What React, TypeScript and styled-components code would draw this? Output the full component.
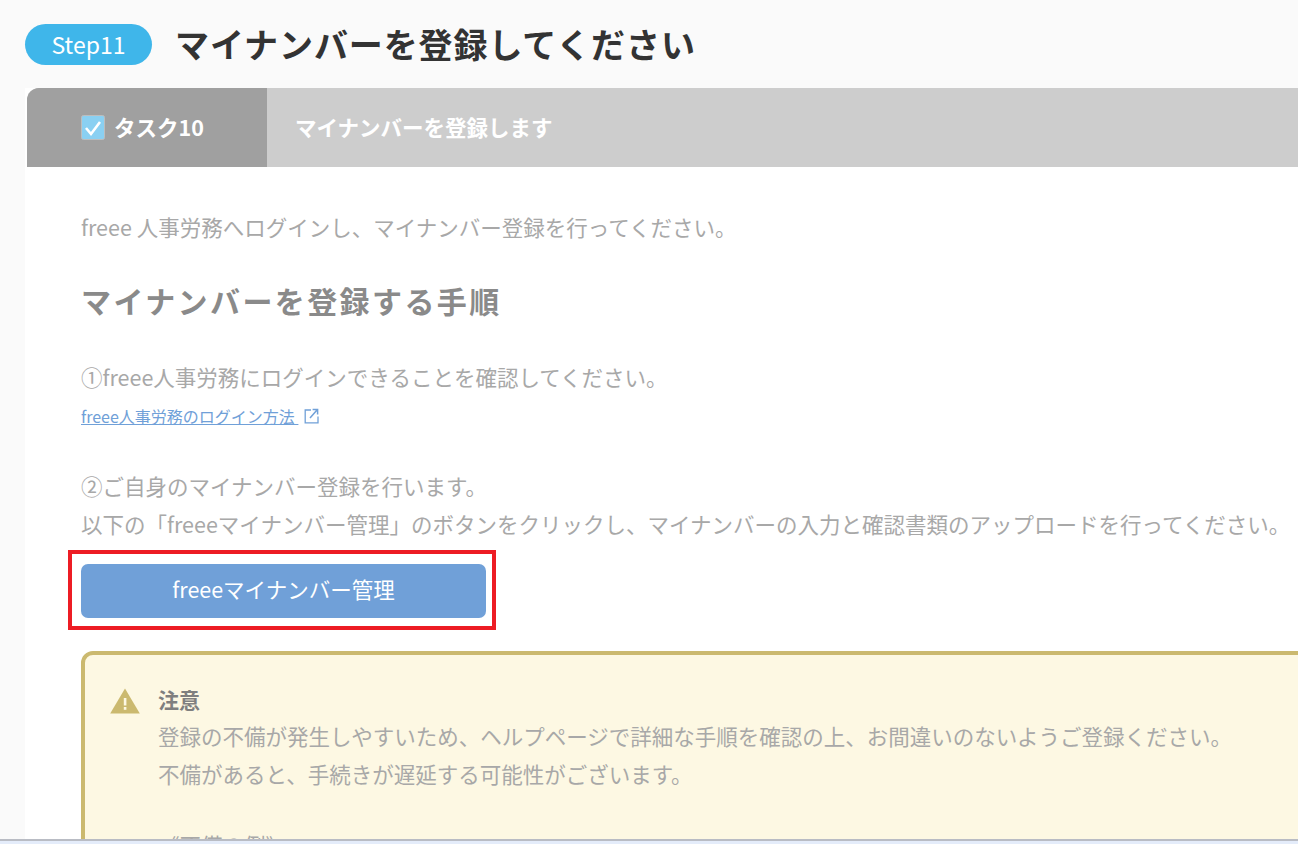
import styled, { createGlobalStyle } from 'styled-components';

const GlobalStyle = createGlobalStyle`
  html, body {
    margin: 0;
    padding: 0;
    height: 100%;
    overflow: hidden;
    background: #fafafa;
    font-family: 'Noto Sans CJK JP', 'Noto Sans', sans-serif;
  }
`;

function CheckBox() {
  return (
    <svg width='24' height='25' viewBox='0 0 24 25'>
      <rect x='0.5' y='0.5' width='23' height='24' rx='2' fill='#8ad0f2' stroke='#bdbdbd' />
      <path d='M5 13l5 6 9-12' fill='none' stroke='#fff' strokeWidth='2.6' />
    </svg>
  );
}

function ExternalIcon() {
  return (
    <svg width='15' height='16' viewBox='0 0 15 16'>
      <path d='M7 2H1.2v12.8H14V8.6' fill='none' stroke='#70a0d8' strokeWidth='1.3' />
      <path d='M6 10l7-8M8.6 1.4h5v5' fill='none' stroke='#70a0d8' strokeWidth='1.5' />
    </svg>
  );
}

function WarningIcon() {
  return (
    <svg width='30' height='26' viewBox='0 0 30 26'>
      <path d='M15 0.5L29.8 25.5H0.2Z' fill='#cbb96f' />
      <rect x='13.8' y='10' width='2.6' height='7.5' fill='#fdf8e3' />
      <rect x='13.8' y='19' width='2.6' height='2.8' fill='#fdf8e3' />
    </svg>
  );
}

export default function App() {
  return (
    <>
      <GlobalStyle />
      <Page>
        <Heading>
          <StepBadge>Step11</StepBadge>
          <Title>マイナンバーを登録してください</Title>
        </Heading>
        <Card>
          <TaskHeader>
            <TaskLabel>
              <CheckBox />
              <TaskName>タスク10</TaskName>
            </TaskLabel>
            <TaskTitle>マイナンバーを登録します</TaskTitle>
          </TaskHeader>
          <CardBody>
            <Intro>freee 人事労務へログインし、マイナンバー登録を行ってください。</Intro>
            <SectionTitle>マイナンバーを登録する手順</SectionTitle>
            <StepGroup $gap={36}>
              <StepText>①freee人事労務にログインできることを確認してください。</StepText>
            </StepGroup>
            <HelpLink>
              <LinkText>freee人事労務のログイン方法 </LinkText>
              <ExternalIcon />
            </HelpLink>
            <StepGroup $gap={39}>
              <StepText>②ご自身のマイナンバー登録を行います。</StepText>
              <StepText>
                以下の「freeeマイナンバー管理」のボタンをクリックし、マイナンバーの入力と確認書類のアップロードを行ってください。
              </StepText>
            </StepGroup>
            <ButtonFrame>
              <PrimaryButton type='button'>freeeマイナンバー管理</PrimaryButton>
            </ButtonFrame>
            <Notice>
              <NoticeIcon>
                <WarningIcon />
              </NoticeIcon>
              <NoticeContent>
                <NoticeTitle>注意</NoticeTitle>
                <NoticeText>
                  登録の不備が発生しやすいため、ヘルプページで詳細な手順を確認の上、お間違いのないようご登録ください。
                </NoticeText>
                <NoticeText>不備があると、手続きが遅延する可能性がございます。</NoticeText>
                <NoticeSub>《不備の例》</NoticeSub>
              </NoticeContent>
            </Notice>
          </CardBody>
        </Card>
      </Page>
      <BottomEdge />
    </>
  );
}

const Page = styled.div`
  height: 839px;
  overflow: hidden;
  padding-left: 25px;
  box-sizing: border-box;
`;

const Heading = styled.div`
  display: flex;
  align-items: center;
  gap: 23px;
  height: 88px;
  padding-top: 1px;
  box-sizing: border-box;
`;

const StepBadge = styled.div`
  width: 127px;
  height: 41px;
  border-radius: 21px;
  background: #3fb6ea;
  color: #fff;
  font-size: 23px;
  line-height: 41px;
  text-align: center;
`;

const Title = styled.h1`
  margin: 0 0 2px;
  color: #333;
  font-size: 34px;
  font-weight: 700;
  letter-spacing: 0.9px;
  white-space: nowrap;
`;

const Card = styled.div`
  width: 1400px;
  background: #fff;
`;

const TaskHeader = styled.div`
  display: flex;
  height: 79px;
  margin-left: 2px;
  background: #cdcdcd;
  border-radius: 12px 0 0 0;
  overflow: hidden;
`;

const TaskLabel = styled.div`
  display: flex;
  align-items: center;
  gap: 9px;
  width: 240px;
  padding-left: 54px;
  box-sizing: border-box;
  background: #a0a0a0;
`;

const TaskName = styled.span`
  margin-bottom: 2px;
  color: #fff;
  font-size: 21.5px;
  font-weight: 700;
`;

const TaskTitle = styled.div`
  display: flex;
  align-items: center;
  padding: 0 0 2px 28px;
  color: #fff;
  font-size: 21.5px;
  font-weight: 700;
`;

const CardBody = styled.div`
  padding: 44px 0 0 56px;
`;

const Intro = styled.p`
  margin: 0;
  color: #a8a8a8;
  font-size: 21.5px;
  line-height: 32px;
  white-space: nowrap;
`;

const SectionTitle = styled.h2`
  margin: 35px 0 0;
  color: #8a8a8a;
  font-size: 30px;
  font-weight: 700;
  line-height: 44px;
  letter-spacing: 2.4px;
`;

const StepGroup = styled.div<{ $gap: number }>`
  margin-top: ${({ $gap }) => $gap}px;
`;

const StepText = styled.p`
  margin: 0;
  color: #a8a8a8;
  font-size: 21.5px;
  line-height: 38px;
  white-space: nowrap;
`;

const HelpLink = styled.div`
  display: flex;
  align-items: center;
  gap: 6px;
  height: 24px;
  margin-top: 8px;
`;

const LinkText = styled.span`
  color: #70a0d8;
  font-size: 16px;
  text-decoration: underline;
  white-space: pre;
`;

const ButtonFrame = styled.div`
  width: 405px;
  margin: 7px 0 0 -13px;
  padding: 10px 6px 8px 9px;
  border: 4px solid #ed1c24;
  box-sizing: content-box;
`;

const PrimaryButton = styled.button`
  display: block;
  width: 405px;
  height: 54px;
  padding: 0 0 5px;
  border: 0;
  border-radius: 7px;
  background: #70a0d8;
  color: #fff;
  font-family: inherit;
  font-size: 21.5px;
`;

const Notice = styled.div`
  display: flex;
  gap: 18px;
  height: 300px;
  margin-top: 21px;
  padding: 32px 0 0 25px;
  background: #fdf8e3;
  border: 4px solid #cbb96f;
  border-radius: 12px 0 0 0;
  box-sizing: border-box;
`;

const NoticeIcon = styled.div`
  padding-top: 1px;
`;

const NoticeContent = styled.div`
  display: flex;
  flex-direction: column;
`;

const NoticeTitle = styled.div`
  margin-bottom: 5px;
  color: #7f7f7f;
  font-size: 21px;
  font-weight: 700;
  line-height: 25px;
`;

const NoticeText = styled.p`
  margin: 0;
  color: #a8a8a8;
  font-size: 21.5px;
  line-height: 38px;
  white-space: nowrap;
`;

const NoticeSub = styled.p`
  margin: 33px 0 0;
  color: #a8a8a8;
  font-size: 21.5px;
  line-height: 38px;
`;

const BottomEdge = styled.div`
  height: 5px;
  background: #e4ecfa;
  border-top: 2px solid #b9bcc4;
  box-sizing: border-box;
`;
